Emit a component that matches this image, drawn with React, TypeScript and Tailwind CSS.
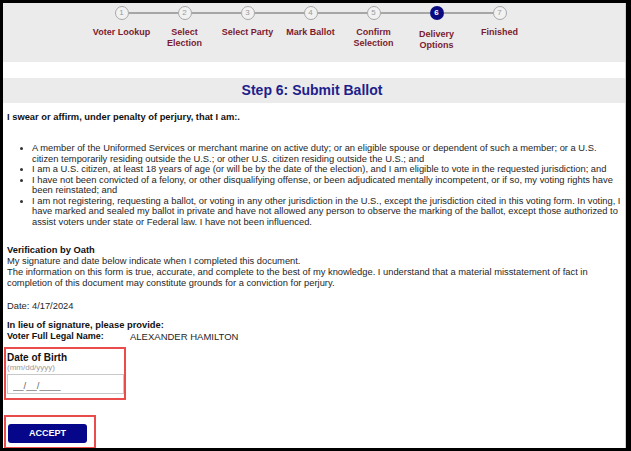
const steps = [
  { n: 1, label: ['Voter Lookup'] },
  { n: 2, label: ['Select', 'Election'] },
  { n: 3, label: ['Select Party'] },
  { n: 4, label: ['Mark Ballot'] },
  { n: 5, label: ['Confirm', 'Selection'] },
  { n: 6, label: ['Delivery', 'Options'] },
  { n: 7, label: ['Finished'] },
];

const current = 6;

function Stepper() {
  return (
    <div className="flex justify-center pr-[7px]">
      {steps.map((s, i) => {
        const active = s.n === current;
        return (
          <div key={s.n} className="flex w-[63px] flex-col items-center">
            <div className="flex w-full items-center">
              <div className={`h-[1.5px] flex-1 ${i === 0 ? 'bg-transparent' : 'bg-[#a6a6a6]'}`} />
              {active ? (
                <div className="flex h-[14px] w-[14px] items-center justify-center rounded-full bg-[#0b0b80] text-[8px] font-bold text-white">
                  {s.n}
                </div>
              ) : (
                <div className="flex h-[14px] w-[14px] items-center justify-center rounded-full border border-[#a8a8a8] bg-[#f2f2f2] text-[8px] text-[#9a9a9a]">
                  {s.n}
                </div>
              )}
              <div className={`h-[1.5px] flex-1 ${i === steps.length - 1 ? 'bg-transparent' : 'bg-[#a6a6a6]'}`} />
            </div>
            <div
              className={`whitespace-nowrap text-center text-[9px] font-bold leading-[11px] text-[#7a1c30] ${
                active ? 'mt-[9px]' : 'mt-[7px]'
              }`}
            >
              {s.label.map((l) => (
                <div key={l}>{l}</div>
              ))}
            </div>
          </div>
        );
      })}
    </div>
  );
}

export default function App() {
  return (
    <div className="h-[451px] w-[631px] overflow-hidden bg-black pb-[3px] pl-[3px] pr-[5px] pt-[3px] font-['Liberation_Sans',Arial,sans-serif]">
      <div className="flex h-full flex-col overflow-hidden border-r border-[#d0d0d0] bg-white">
        <div className="h-[59px] shrink-0 bg-[#ebebeb] pt-[3px]">
          <Stepper />
        </div>
        <div className="h-[16px] shrink-0 bg-white" />
        <div className="flex h-[25px] shrink-0 items-center justify-center pr-[4px] bg-[#ebebeb] text-[14px] font-bold text-[#1e1e8c]">
          Step 6: Submit Ballot
        </div>

        <div className="px-[4px] pr-[3px] pt-[9px] text-[9.35px] text-[#262626]">
          <p className="font-bold leading-[11px] text-[#111]">I swear or affirm, under penalty of perjury, that I am:.</p>

          <ul className="mt-[20px] list-disc pl-[25px] leading-[10.5px] marker:text-[#333]">
            <li>
              A member of the Uniformed Services or merchant marine on active duty; or an eligible spouse or dependent of
              such a member; or a U.S. citizen temporarily residing outside the U.S.; or other U.S. citizen residing outside
              the U.S.; and
            </li>
            <li>
              I am a U.S. citizen, at least 18 years of age (or will be by the date of the election), and I am eligible to
              vote in the requested jurisdiction; and
            </li>
            <li>
              I have not been convicted of a felony, or other disqualifying offense, or been adjudicated mentally
              incompetent, or if so, my voting rights have been reinstated; and
            </li>
            <li>
              I am not registering, requesting a ballot, or voting in any other jurisdiction in the U.S., except the
              jurisdiction cited in this voting form. In voting, I have marked and sealed my ballot in private and have not
              allowed any person to observe the marking of the ballot, except those authorized to assist voters under state
              or Federal law. I have not been influenced.
            </li>
          </ul>

          <div className="mt-[18px] leading-[11px]">
            <p className="font-bold text-[#111]">Verification by Oath</p>
            <p>My signature and date below indicate when I completed this document.</p>
            <p>
              The information on this form is true, accurate, and complete to the best of my knowledge. I understand that a
              material misstatement of fact in completion of this document may constitute grounds for a conviction for
              perjury.
            </p>
          </div>

          <p className="mt-[12px] leading-[11px]">Date: 4/17/2024</p>

          <p className="mt-[8px] font-bold leading-[11px] text-[#111]">In lieu of signature, please provide:</p>
          <div className="flex leading-[11px]">
            <span className="w-[123px] text-[9px] font-bold text-[#111]">Voter Full Legal Name:</span>
            <span className="text-[9.5px]">ALEXANDER HAMILTON</span>
          </div>

          <div className="ml-[-3px] mt-[5px] h-[53px] w-[122px] border-2 border-[#ea4b4b] pt-[3px]">
            <p className="pl-[1px] text-[10px] font-bold leading-[11px] text-[#111]">Date of Birth</p>
            <p className="pl-[1px] text-[8px] leading-[9px] text-[#9a9a9a]">(mm/dd/yyyy)</p>
            <input
              type="text"
              placeholder="__/__/____"
              className="ml-[1px] mt-[2px] h-[20px] w-[117px] border border-[#c8c8c8] px-[5px] pt-[3px] text-[9.5px] text-[#666] outline-none placeholder:text-[#666]"
            />
          </div>

          <div className="ml-[-3px] mt-[15px] h-[34px] w-[92px] border-2 border-[#ea4b4b] pt-[7px]">
            <button className="ml-[2px] flex h-[19px] w-[79px] items-center justify-center rounded-[3px] bg-[#06068a] text-[9px] font-bold text-white">
              ACCEPT
            </button>
          </div>
        </div>
      </div>
    </div>
  );
}
